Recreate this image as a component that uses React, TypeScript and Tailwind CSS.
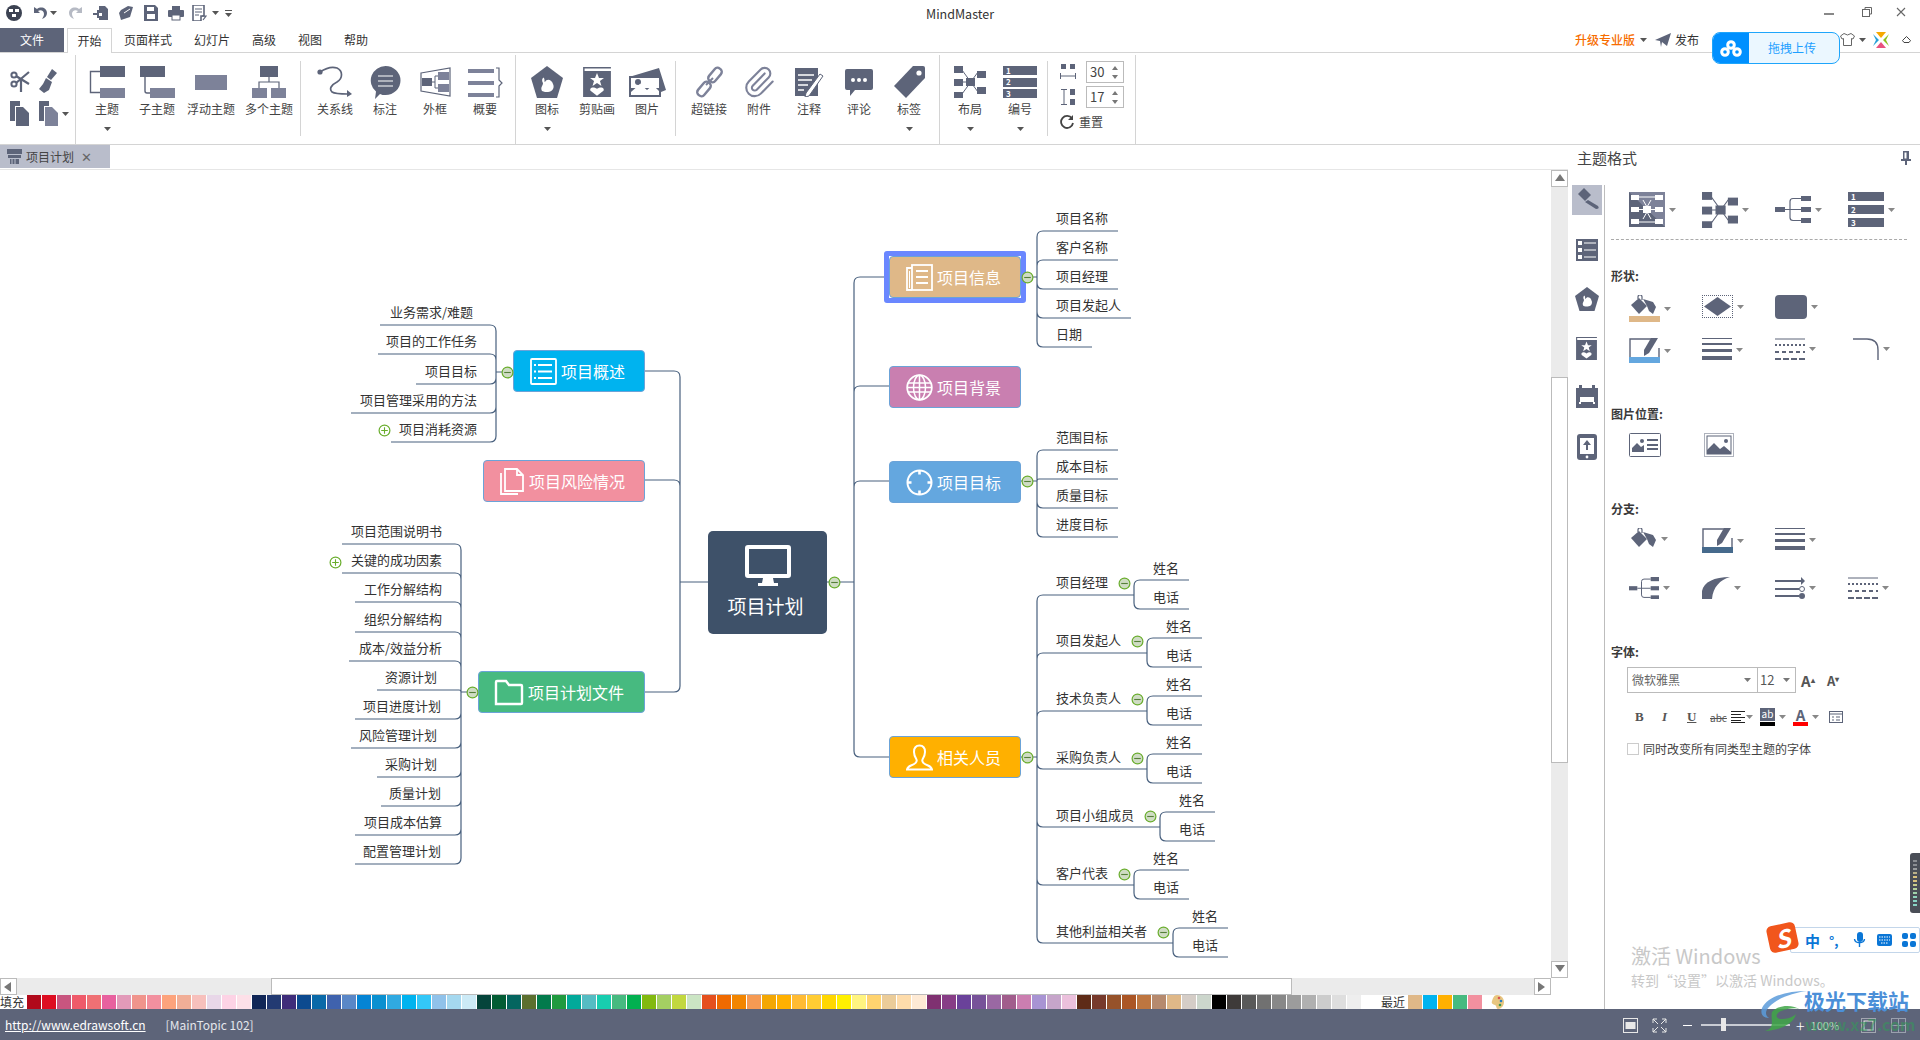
import React from 'react';
import { Paperclip } from 'lucide-react';

const C = '#5d6479';
const L = '#7d8299';
const LINE = '#48607e';

const PALETTE = [
  '#b10a1b', '#dd0d21', '#c8557f', '#ef5a6a', '#ef7074', '#e8619f', '#e29ab9', '#f0948c', '#f2909f', '#fda37c', '#f1ae97', '#f7c0bc', '#e8d7e8', '#fdd3e5', '#fde0e8',
  '#112757', '#233a72', '#3f2d7a', '#0c4a8f', '#0a69a8', '#3f62ad', '#5a87c7', '#0584d4', '#0a90d0', '#30a9e1', '#00b3ef', '#33c7f7', '#90c2ea', '#a5d8ef', '#cceaf6',
  '#05443b', '#035c34', '#04655f', '#5c6f2f', '#037a4c', '#209a3f', '#02a99a', '#55bcc3', '#18cdaf', '#47ba80', '#02b050', '#82b90f', '#a4cf62', '#c2d83f', '#cbe5c4',
  '#e5501e', '#ef6a00', '#f28500', '#f59a53', '#f3a703', '#ffb000', '#ffbb33', '#ffcc33', '#ffd700', '#fff000', '#fff480', '#ffd36f', '#ebcc99', '#fedcab', '#feead5',
  '#7f3171', '#873d86', '#6a429a', '#775299', '#9a68a3', '#a15d8c', '#cb7eb0', '#a894d3', '#c6a5ca', '#ebc0dc',
  '#5e2b17', '#773a2c', '#96522a', '#ab5626', '#be7640', '#b68a6e', '#dfb888', '#d5cdc7', '#ccd6cc',
  '#000000', '#3e3a39', '#595959', '#717171', '#888888', '#9c9c9c', '#b0b0b0', '#cccccc', '#dedede', '#eeeeee',
];
const RECENT = ['#dfb888', '#00b3ef', '#ffb000', '#47ba80', '#f2909f'];

// connector helper, all coordinates are page pixels
const tree = (fromX: number, cy: number, trunk: number, kids: [number, number][]) => {
  const dir = kids[0][1] > trunk ? 1 : -1;
  let d = `M${fromX} ${cy}H${trunk}`;
  kids.forEach(([y, end]) => {
    const gap = Math.abs(y - cy);
    const r = Math.min(6, gap);
    const sign = y < cy ? 1 : -1;
    d += `M${trunk} ${cy}V${y + sign * r}Q${trunk} ${y} ${trunk + dir * r} ${y}H${end}`;
  });
  return d;
};

const PEOPLE = [
  { name: '项目经理', y: 595, t: 583, trunk: 1134, dot: 1124 },
  { name: '项目发起人', y: 653, t: 641, trunk: 1147, dot: 1137 },
  { name: '技术负责人', y: 711, t: 699, trunk: 1147, dot: 1137 },
  { name: '采购负责人', y: 769, t: 758, trunk: 1147, dot: 1137 },
  { name: '项目小组成员', y: 827, t: 816, trunk: 1160, dot: 1150 },
  { name: '客户代表', y: 885, t: 874, trunk: 1134, dot: 1124 },
  { name: '其他利益相关者', y: 943, t: 932, trunk: 1173, dot: 1163 },
];

const OVERVIEW = [
  { name: '业务需求/难题', y: 325, end: 380, right: 473 },
  { name: '项目的工作任务', y: 354, end: 378, right: 477 },
  { name: '项目目标', y: 384, end: 416, right: 477 },
  { name: '项目管理采用的方法', y: 413, end: 351, right: 477 },
  { name: '项目消耗资源', y: 442, end: 391, right: 477 },
];

const FILES = [
  { name: '项目范围说明书', y: 544, end: 342, right: 442 },
  { name: '关键的成功因素', y: 573, end: 342, right: 442 },
  { name: '工作分解结构', y: 602, end: 355, right: 442 },
  { name: '组织分解结构', y: 632, end: 355, right: 442 },
  { name: '成本/效益分析', y: 661, end: 349, right: 442 },
  { name: '资源计划', y: 690, end: 377, right: 437 },
  { name: '项目进度计划', y: 719, end: 355, right: 441 },
  { name: '风险管理计划', y: 748, end: 351, right: 437 },
  { name: '采购计划', y: 777, end: 377, right: 437 },
  { name: '质量计划', y: 806, end: 381, right: 441 },
  { name: '项目成本估算', y: 835, end: 355, right: 442 },
  { name: '配置管理计划', y: 864, end: 355, right: 441 },
];

const INFO = [
  { name: '项目名称', y: 231, end: 1118 },
  { name: '客户名称', y: 260, end: 1118 },
  { name: '项目经理', y: 289, end: 1118 },
  { name: '项目发起人', y: 318, end: 1131 },
  { name: '日期', y: 347, end: 1092 },
];

const GOALS = [
  { name: '范围目标', y: 450, end: 1118 },
  { name: '成本目标', y: 479, end: 1118 },
  { name: '质量目标', y: 508, end: 1118 },
  { name: '进度目标', y: 537, end: 1118 },
];

const METER = ['#8a8d92', '#8a8d92', '#9a9c9e', '#b9b08a', '#d9c27e', '#d9c27e', '#c9cc8c', '#b5d29a', '#a0d3ab', '#8fd4bc', '#88d4c4', '#88d4c4'];

const Caret = ({ color = '#555' }: { color?: string }) => (
  <svg width="7" height="4" viewBox="0 0 7 4" className="shrink-0"><path d="M0 0H7L3.5 4Z" fill={color} /></svg>
);

const NodeText = ({ x, right, y, children }: { x?: number; right?: number; y: number; children: React.ReactNode }) => (
  <span
    className="absolute h-5 leading-5 text-[13px] text-[#333] whitespace-nowrap"
    style={right !== undefined ? { right: 1551 - right, top: y - 181 } : { left: x, top: y - 181 }}
  >
    {children}
  </span>
);

const Toggle = ({ x, y, plus }: { x: number; y: number; plus?: boolean }) => (
  <svg width="13" height="13" viewBox="0 0 13 13" className="absolute" style={{ left: x - 6.5, top: y - 176.5 }}>
    <circle cx="6.5" cy="6.5" r="5.4" fill={plus ? '#fff' : '#cfdcc4'} stroke="#69ad2c" strokeWidth="1.2" />
    <path d={plus ? 'M3.2 6.5H9.8M6.5 3.2V9.8' : 'M3.2 6.5H9.8'} stroke={plus ? '#69ad2c' : '#55803a'} strokeWidth="1.1" />
  </svg>
);

const Topic = ({ x, y, w, pl, bg, icon, children }: { x: number; y: number; w: number; pl: number; bg: string; icon: React.ReactNode; children: React.ReactNode }) => (
  <div
    className="absolute h-[42px] flex items-center gap-[4px] rounded-[4px] border border-[#6ba3d8] text-white text-base whitespace-nowrap"
    style={{ left: x, top: y - 170, width: w, paddingLeft: pl, backgroundColor: bg }}
  >
    {icon}
    <span>{children}</span>
  </div>
);

const IcoList = () => (
  <svg width="27" height="27" viewBox="0 0 27 27" fill="none" stroke="#fff" strokeWidth="1.8">
    <rect x="1" y="1" width="25" height="25" rx="1" />
    <path d="M8 7H22M8 13.5H22M8 20H22" />
    <path d="M4 7H6M4 13.5H6M4 20H6" strokeWidth="2.2" />
  </svg>
);
const IcoFiles = () => (
  <svg width="25" height="27" viewBox="0 0 25 27" fill="none" stroke="#fff" strokeWidth="1.8">
    <path d="M5 1H17L23 7V23H5Z" />
    <path d="M17 1V7H23" />
    <path d="M1 5V26H18" />
  </svg>
);
const IcoFolder = () => (
  <svg width="30" height="27" viewBox="0 0 30 27" fill="none" stroke="#fff" strokeWidth="2.4">
    <path d="M2 25V3Q2 2 3 2H12L15 6H27Q28 6 28 7V24Q28 25 27 25Z" />
  </svg>
);
const IcoNews = () => (
  <svg width="27" height="27" viewBox="0 0 27 27" fill="none" stroke="#fff" strokeWidth="1.8">
    <rect x="6" y="1" width="20" height="25" />
    <path d="M10 7H22M10 13H22M10 19H22" />
    <path d="M6 4H1V26H6" />
    <path d="M3.5 7V24" strokeWidth="1" />
  </svg>
);
const IcoGlobe = () => (
  <svg width="27" height="27" viewBox="0 0 27 27" fill="none" stroke="#fff" strokeWidth="1.5">
    <circle cx="13.5" cy="13.5" r="12.3" strokeWidth="1.8" />
    <ellipse cx="13.5" cy="13.5" rx="6" ry="12.3" />
    <path d="M13.5 1V26M2 9H25M1.5 13.5H25.5M2 18H25" />
  </svg>
);
const IcoTarget = () => (
  <svg width="27" height="27" viewBox="0 0 27 27" fill="none" stroke="#fff" strokeWidth="2">
    <circle cx="13.5" cy="13.5" r="12" />
    <path d="M13.5 2V5.5M13.5 21.5V25M2 13.5H5.5M21.5 13.5H25" strokeWidth="2.6" />
  </svg>
);
const IcoPerson = () => (
  <svg width="27" height="27" viewBox="0 0 27 27" fill="none" stroke="#fff" strokeWidth="2">
    <path d="M13.5 1.5C9.5 1.5 8 4.5 8 8C8 11 9.5 14 10.5 15.5C11.5 18 9 20 5 21.5C3 22.3 1.5 23.5 1 25.5H26C25.5 23.5 24 22.3 22 21.5C18 20 15.5 18 16.5 15.5C17.5 14 19 11 19 8C19 4.5 17.5 1.5 13.5 1.5Z" />
  </svg>
);

const Canvas = () => (
  <div className="relative flex-1 h-full overflow-visible bg-white">
    <svg className="absolute left-0 top-0" width="1551" height="808" viewBox="0 170 1551 808" fill="none" stroke={LINE} strokeWidth="1.2">
      <path d={tree(708, 582, 680, [[371, 645], [480, 645], [692, 645]])} />
      <path d={tree(827, 582, 854, [[277, 889], [386, 889], [481, 889], [757, 889]])} />
      <path d={tree(513, 372, 496, OVERVIEW.map((o) => [o.y, o.end] as [number, number]))} />
      <path d={tree(478, 692, 461, FILES.map((o) => [o.y, o.end] as [number, number]))} />
      <path d={tree(1021, 277, 1037, INFO.map((o) => [o.y, o.end] as [number, number]))} />
      <path d={tree(1021, 481, 1037, GOALS.map((o) => [o.y, o.end] as [number, number]))} />
      <path d={tree(1021, 757, 1037, PEOPLE.map((o) => [o.y, o.trunk] as [number, number]))} />
      {PEOPLE.map((p) => (
        <path key={p.name} d={tree(p.trunk, p.y, p.trunk, [[p.y - 15, p.trunk + 55], [p.y + 14, p.trunk + 55]])} />
      ))}
    </svg>

    {/* central topic */}
    <div className="absolute left-[708px] top-[361px] w-[119px] h-[103px] rounded-[5px] bg-[#3e5169] flex flex-col items-center text-white">
      <svg width="46" height="42" viewBox="0 0 46 42" className="mt-[14px]">
        <rect x="2" y="2" width="42" height="29" rx="1" fill="none" stroke="#fff" strokeWidth="4" />
        <path d="M18 33H28L29 38H33V41H13V38H17Z" fill="#fff" />
      </svg>
      <span className="mt-[7px] -ml-[4px] text-[19px] leading-6 whitespace-nowrap">项目计划</span>
    </div>

    <div className="absolute left-[884px] top-[81px] w-[142px] h-[52px] rounded-[3px] border-[5px] border-[#6a87ff]" />
    <Topic x={889} y={256} w={132} pl={16} bg="#dfb888" icon={<IcoNews />}>项目信息</Topic>
    <Topic x={889} y={366} w={132} pl={16} bg="#c97fb0" icon={<IcoGlobe />}>项目背景</Topic>
    <Topic x={889} y={461} w={132} pl={16} bg="#64a7df" icon={<IcoTarget />}>项目目标</Topic>
    <Topic x={889} y={736} w={132} pl={16} bg="#ffb000" icon={<IcoPerson />}>相关人员</Topic>
    <Topic x={513} y={350} w={132} pl={16} bg="#00b3ef" icon={<IcoList />}>项目概述</Topic>
    <Topic x={483} y={460} w={162} pl={16} bg="#f2909f" icon={<IcoFiles />}>项目风险情况</Topic>
    <Topic x={478} y={671} w={167} pl={15} bg="#47ba80" icon={<IcoFolder />}>项目计划文件</Topic>

    <Toggle x={834} y={582} />
    <Toggle x={507} y={372} />
    <Toggle x={472} y={692} />
    <Toggle x={1027} y={277} />
    <Toggle x={1027} y={481} />
    <Toggle x={1027} y={757} />
    <Toggle x={384} y={430} plus />
    <Toggle x={335} y={562} plus />

    {INFO.map((o) => <NodeText key={o.name} x={1056} y={o.y - 12}>{o.name}</NodeText>)}
    {GOALS.map((o) => <NodeText key={o.name} x={1056} y={o.y - 12}>{o.name}</NodeText>)}
    {OVERVIEW.map((o) => <NodeText key={o.name} right={o.right} y={o.y - 12}>{o.name}</NodeText>)}
    {FILES.map((o) => <NodeText key={o.name} right={o.right} y={o.y - 12}>{o.name}</NodeText>)}
    {PEOPLE.map((p) => (
      <React.Fragment key={p.name}>
        <NodeText x={1056} y={p.t}>{p.name}</NodeText>
        <Toggle x={p.dot} y={p.t} />
        <NodeText x={p.trunk + 19} y={p.y - 26}>姓名</NodeText>
        <NodeText x={p.trunk + 19} y={p.y + 3}>电话</NodeText>
      </React.Fragment>
    ))}
  </div>
);

/* ---------- ribbon icons ---------- */
const RibbonItem = ({ label, icon, caret, w = 50, className = '' }: { label: string; icon: React.ReactNode; caret?: boolean; w?: 50 | 58; className?: string }) => (
  <div className={`${w === 50 ? 'w-[50px]' : 'w-[58px]'} h-[91px] shrink-0 flex flex-col items-center pt-[12px] ${className}`}>
    <div className="h-[34px] flex items-center justify-center">{icon}</div>
    <span className="mt-[2px] h-4 leading-4 text-xs text-[#444] whitespace-nowrap">{label}</span>
    {caret && <div className="mt-[10px]"><Caret /></div>}
  </div>
);

const Sep = () => <div className="w-px h-[75px] self-center bg-[#d4d4d4] shrink-0" />;
const GroupSep = () => <div className="w-px h-[89px] self-end bg-[#d4d4d4] shrink-0" />;

const IcoMainTopic = () => (
  <svg width="36" height="32" viewBox="0 0 36 32">
    <rect x="11" y="0" width="25" height="11" fill={C} />
    <rect x="11" y="22" width="25" height="10" fill={L} />
    <path d="M11 5.5H1.5V26.5H11" fill="none" stroke={C} strokeWidth="1.4" />
  </svg>
);
const IcoSubTopic = () => (
  <svg width="35" height="32" viewBox="0 0 35 32">
    <rect x="0" y="0" width="25" height="11" fill={C} />
    <rect x="10" y="22" width="25" height="10" fill={L} />
    <path d="M5 11V25Q5 27 7 27H10" fill="none" stroke={C} strokeWidth="1.4" />
  </svg>
);
const IcoFloat = () => <svg width="32" height="15" viewBox="0 0 32 15"><rect width="32" height="15" fill={L} /></svg>;
const IcoMulti = () => (
  <svg width="34" height="32" viewBox="0 0 34 32">
    <rect x="8" y="0" width="18" height="11" fill={C} />
    <rect x="0" y="22" width="15" height="10" fill={L} />
    <rect x="19" y="22" width="15" height="10" fill={L} />
    <path d="M17 11V16M7 22V16H27V22" fill="none" stroke={C} strokeWidth="1.2" />
  </svg>
);
const IcoRelation = () => (
  <svg width="36" height="32" viewBox="0 0 36 32" fill="none" stroke={C} strokeWidth="1.7">
    <circle cx="3" cy="6" r="2.6" fill={C} stroke="none" />
    <path d="M3 6C9 2 14 0 20 2C26 5 26 12 20 16C14 19 12 23 15 26C18 28 25 28 31 28" />
    <path d="M30 24L35 28L30 31Z" fill={C} stroke="none" />
  </svg>
);
const IcoCallout = () => (
  <svg width="31" height="33" viewBox="0 0 31 33">
    <path d="M15.5 0A15 14.5 0 0 1 15.5 29C13 29 12 29 10 28L5 33L6 25.5A15 14.5 0 0 1 15.5 0Z" fill={C} />
    <path d="M8 10H23M8 15H23M8 20H23" stroke="#fff" strokeWidth="1.2" />
  </svg>
);
const IcoBoundary = () => (
  <svg width="31" height="30" viewBox="0 0 31 30" fill="none">
    <path d="M1 6L30 1V29L1 24Z" stroke={C} strokeWidth="1.2" />
    <rect x="2" y="11" width="10" height="8" fill={C} />
    <rect x="18" y="5" width="11" height="8" fill={L} />
    <rect x="18" y="17" width="11" height="8" fill={L} />
    <path d="M12 15H15M15 9H18M15 21H18M15 9V21" stroke={C} strokeWidth="1" />
  </svg>
);
const IcoSummary = () => (
  <svg width="35" height="31" viewBox="0 0 35 31" fill="none">
    <rect y="2" width="26" height="4" fill={L} />
    <rect y="14" width="26" height="4" fill={L} />
    <rect y="26" width="26" height="4" fill={L} />
    <path d="M28 1H31V13L34 16L31 19V30H28" stroke={C} strokeWidth="1.2" />
  </svg>
);
const IcoPentagon = ({ s = 32 }: { s?: number }) => (
  <svg width={s} height={s} viewBox="0 0 32 32">
    <path d="M16 0L32 12L26 32H6L0 12Z" fill={C} />
    <path d="M11 25C9 21 12 20 12 17C10 14 12 11 13 12C14 14 13 16 14 16C16 12 21 14 22 18C24 22 21 26 17 26C15 26 13 26 11 25Z" fill="#fff" />
  </svg>
);
const IcoClipart = ({ s = 28 }: { s?: number }) => (
  <svg width={s} height={s * 1.1} viewBox="0 0 28 31">
    <path d="M0 0H28V1.5H1.5V4H28V31H0Z" fill={C} />
    <path d="M14 6L16 11H21L17 14L18.5 19L14 16L9.5 19L11 14L7 11H12Z" fill="#fff" />
    <path d="M14 29L7.5 24C6 21 10 19 14 22C18 19 22 21 20.5 24Z" fill="#fff" />
  </svg>
);
const IcoPicture = () => (
  <svg width="37" height="29" viewBox="0 0 37 29">
    <path d="M0 9L30 0L37 22L32 24V8L4 8Z" fill={C} />
    <rect x="0" y="8" width="32" height="21" fill={C} />
    <rect x="2" y="10" width="28" height="10" fill="#fff" />
    <circle cx="9" cy="14" r="3" fill={C} />
    <path d="M2 24L11 16L18 22L24 17L30 23V27H2Z" fill="#fff" />
  </svg>
);
const IcoLink = () => (
  <svg width="31" height="32" viewBox="0 0 31 32" fill="none" stroke={L} strokeWidth="2.4">
    <rect x="-8" y="-4" width="16" height="8" rx="3.5" transform="translate(21 9) rotate(-50)" />
    <rect x="-8" y="-4" width="16" height="8" rx="3.5" transform="translate(10 23) rotate(-50)" />
    <path d="M12 19L19 12" strokeWidth="2" />
  </svg>
);
const IcoNote = () => (
  <svg width="29" height="29" viewBox="0 0 29 29">
    <rect width="23" height="28" fill={C} />
    <path d="M3 7H19M3 12H17M3 17H13M3 22H9" stroke="#fff" strokeWidth="1.6" />
    <path d="M25 6L28 8L14 28L10 29L11 25Z" fill="#fff" stroke={C} strokeWidth="1" />
  </svg>
);
const IcoComment = () => (
  <svg width="28" height="27" viewBox="0 0 28 27">
    <path d="M2 0H26Q28 0 28 2V19Q28 21 26 21H10L5 27V21H2Q0 21 0 19V2Q0 0 2 0Z" fill={C} />
    <circle cx="8" cy="11" r="2" fill="#fff" /><circle cx="14" cy="11" r="2" fill="#fff" /><circle cx="20" cy="11" r="2" fill="#fff" />
  </svg>
);
const IcoTag = () => (
  <svg width="31" height="32" viewBox="0 0 31 32">
    <path d="M19 0H29Q31 0 31 2V12L12 32L0 20Z" fill={C} />
    <circle cx="25" cy="7" r="2.6" fill="#fff" />
  </svg>
);
const IcoMapLayout = ({ s = 32 }: { s?: number }) => (
  <svg width={s} height={s} viewBox="0 0 32 32">
    <path d="M8 4L24 26M8 28L24 6M8 16H16" stroke={C} strokeWidth="1" />
    <rect x="0" y="0" width="9" height="7" fill={C} /><rect x="0" y="13" width="9" height="7" fill={C} /><rect x="0" y="26" width="9" height="7" fill={C} />
    <rect x="12" y="12" width="9" height="8" fill={C} />
    <rect x="23" y="5" width="9" height="7" fill={C} /><rect x="23" y="21" width="9" height="7" fill={C} />
  </svg>
);
const Numbered = ({ w = 34, h = 32 }: { w?: number; h?: number }) => {
  const barH = Math.round(h * 0.27);
  return (
    <div className="flex flex-col justify-between" style={{ width: w, height: h }}>
      {['1', '2', '3'].map((n) => (
        <div key={n} className="bg-[#5d6479] pl-[3px] text-[8px] font-bold text-white flex items-center" style={{ height: barH }}>{n}</div>
      ))}
    </div>
  );
};

const QatIcon = ({ children }: { children: React.ReactNode }) => (
  <svg width="16" height="16" viewBox="0 0 16 16" className="shrink-0">{children}</svg>
);

const Qat = () => (
  <div className="absolute left-[6px] top-[5px] flex items-center h-4">
    <QatIcon>
      <circle cx="8" cy="8" r="8" fill="#3c4252" />
      <rect x="3" y="4" width="4" height="3" fill="#fff" /><rect x="9" y="4" width="4" height="3" fill="#fff" />
      <rect x="6" y="9" width="4" height="3" fill="#fff" />
    </QatIcon>
    <div className="w-[10px]" />
    <QatIcon><path d="M2 2V8H8L6 6C9 4 12 6 12 9C12 11 11 12 10 14C13 13 15 11 15 8C15 3 9 1 5 4Z" fill={C} /></QatIcon>
    <div className="w-[2px]" />
    <Caret />
    <div className="w-[11px]" />
    <QatIcon><path d="M14 2V8H8L10 6C7 4 4 6 4 9C4 11 5 12 6 14C3 13 1 11 1 8C1 3 7 1 11 4Z" fill="#b6bac4" /></QatIcon>
    <div className="w-[9px]" />
    <QatIcon><path d="M6 1H12L15 4V15H6V11H9V8H6ZM0 8H4V5H6V13H4V10H0Z" fill={C} /></QatIcon>
    <div className="w-[9px]" />
    <QatIcon><path d="M3 5L10 1L15 2L12 12L3 15L1 8Z" fill={C} /><path d="M6 8L12 4" stroke="#fff" /></QatIcon>
    <div className="w-[9px]" />
    <QatIcon><path d="M1 0H12L15 3V16H1Z" fill={C} /><rect x="4" y="2" width="7" height="4" fill="#fff" /><rect x="4" y="9" width="8" height="5" fill="#fff" /></QatIcon>
    <div className="w-[9px]" />
    <QatIcon><rect x="4" y="1" width="8" height="4" fill={C} /><rect x="0" y="5" width="16" height="7" rx="1" fill={C} /><rect x="4" y="10" width="8" height="5" fill="#fff" stroke={C} /></QatIcon>
    <div className="w-[7px]" />
    <QatIcon><path d="M2 0H13V11H10V16H2Z" fill="none" stroke={C} strokeWidth="1.6" /><path d="M4 4H11M4 7H11M4 10H8M11 11H15L12 15" stroke={C} strokeWidth="1.2" fill="none" /></QatIcon>
    <div className="w-[5px]" />
    <Caret />
    <div className="w-[6px]" />
    <svg width="7" height="7" viewBox="0 0 7 7"><path d="M0 0H7V1H0ZM0 3H7L3.5 7Z" fill="#555" /></svg>
  </div>
);

const SpinBox = ({ value }: { value: string }) => (
  <div className="w-[38px] h-[22px] border border-[#bbb] flex items-center justify-between pl-[3px] pr-[5px] text-[13px] text-[#444]">
    <span>{value}</span>
    <div className="flex flex-col gap-[5px]">
      <svg width="6" height="4" viewBox="0 0 6 4"><path d="M0 4H6L3 0Z" fill="#777" /></svg>
      <svg width="6" height="4" viewBox="0 0 6 4"><path d="M0 0H6L3 4Z" fill="#777" /></svg>
    </div>
  </div>
);

const Ribbon = () => (
  <div className="relative h-[93px] border-y border-[#d4d4d4] flex bg-white">
    <div className="w-[75px] shrink-0 grid grid-cols-[29px_40px] auto-rows-[33px] pl-[10px] pt-[11px] items-center">
      <svg width="22" height="24" viewBox="0 0 22 24" fill="none" stroke={C} strokeWidth="2">
        <circle cx="4" cy="6" r="2.6" /><circle cx="4" cy="15" r="2.6" />
        <path d="M6 7L19 15M6 14L19 3M11 11V23" strokeWidth="2.2" />
      </svg>
      <svg width="18" height="24" viewBox="0 0 18 24"><path d="M13 0L18 4L12 11L8 8Z" fill={C} /><path d="M7 9L13 13L10 21L5 24L0 20L4 15Z" fill={C} /></svg>
      <svg width="19" height="25" viewBox="0 0 19 25"><path d="M0 0H10V5H5V20H0Z" fill={C} /><path d="M6 6H13L19 12V25H6Z" fill={C} /></svg>
      <div className="flex items-center gap-[4px]">
        <svg width="19" height="25" viewBox="0 0 19 25"><path d="M0 0H10V5H5V20H0Z" fill={C} /><path d="M6 6H13L19 12V25H6Z" fill={L} /></svg>
        <Caret />
      </div>
    </div>
    <GroupSep />
    <div className="flex pl-[6px]">
      <RibbonItem label="主题" caret icon={<IcoMainTopic />} />
      <RibbonItem label="子主题" icon={<IcoSubTopic />} />
      <RibbonItem label="浮动主题" w={58} icon={<IcoFloat />} />
      <RibbonItem label="多个主题" w={58} icon={<IcoMulti />} />
    </div>
    <div className="w-[2px]" />
    <Sep />
    <div className="flex pl-[9px] pr-[5px]">
      <RibbonItem label="关系线" icon={<IcoRelation />} />
      <RibbonItem label="标注" icon={<IcoCallout />} />
      <RibbonItem label="外框" icon={<IcoBoundary />} />
      <RibbonItem label="概要" icon={<IcoSummary />} />
    </div>
    <GroupSep />
    <div className="flex pl-[6px] pr-[3px]">
      <RibbonItem label="图标" caret icon={<IcoPentagon />} />
      <RibbonItem label="剪贴画" icon={<IcoClipart />} />
      <RibbonItem label="图片" icon={<IcoPicture />} />
    </div>
    <Sep />
    <div className="flex pl-[8px] pr-[5px]">
      <RibbonItem label="超链接" icon={<IcoLink />} />
      <RibbonItem label="附件" icon={<Paperclip size={34} color={L} strokeWidth={1.5} />} />
      <RibbonItem label="注释" icon={<IcoNote />} />
      <RibbonItem label="评论" icon={<IcoComment />} />
      <RibbonItem label="标签" caret icon={<IcoTag />} />
    </div>
    <GroupSep />
    <div className="flex pl-[5px] pr-[2px]">
      <RibbonItem label="布局" caret icon={<IcoMapLayout />} />
      <RibbonItem label="编号" caret icon={<Numbered />} />
    </div>
    <Sep />
    <div className="w-[87px] flex flex-col pl-[12px] pt-[8px]">
      <div className="flex items-center gap-[10px]">
        <svg width="16" height="16" viewBox="0 0 16 16"><rect x="1" y="0" width="5" height="5" fill={C} /><rect x="10" y="0" width="5" height="5" fill={C} /><path d="M0.5 9V15M15.5 9V15M0 12H16" stroke={C} /></svg>
        <SpinBox value="30" />
      </div>
      <div className="flex items-center gap-[10px] mt-[3px]">
        <svg width="16" height="16" viewBox="0 0 16 16"><path d="M1 0.5H7M1 15.5H7M4 0.5V15.5" stroke={C} /><rect x="10" y="0" width="5" height="6" fill={C} /><rect x="10" y="10" width="5" height="6" fill={C} /></svg>
        <SpinBox value="17" />
      </div>
      <div className="flex items-center gap-[5px] mt-[4px] h-5 text-xs text-[#444]">
        <svg width="14" height="15" viewBox="0 0 14 15" fill="none" stroke="#444" strokeWidth="1.8"><path d="M12 3.5A6 6 0 1 0 13 8" /><path d="M13 0V5H8" fill="#444" stroke="none" /></svg>
        <span>重置</span>
      </div>
    </div>
    <GroupSep />
  </div>
);

const ScrollBtn = ({ dir }: { dir: 'up' | 'down' | 'left' | 'right' }) => {
  const d = { up: 'M0 7H10L5 0Z', down: 'M0 0H10L5 7Z', left: 'M7 0V10L0 5Z', right: 'M0 0V10L7 5Z' }[dir];
  return (
    <div className="w-[17px] h-[17px] shrink-0 bg-white border border-[#bbb] flex items-center justify-center">
      <svg width="10" height="10" viewBox="0 0 10 10"><path d={d} fill="#777" /></svg>
    </div>
  );
};

const Cell = ({ children }: { children: React.ReactNode }) => (
  <div className="w-[73px] shrink-0 flex items-center gap-[4px]">{children}<Caret color="#888" /></div>
);

const Bucket = () => (
  <svg width="28" height="21" viewBox="0 0 28 21">
    <path d="M2 10L10 3L18 11L10 19Z" fill={C} />
    <path d="M9 4V2Q9 0 11 0T13 2V5" fill="none" stroke={C} strokeWidth="1.2" />
    <path d="M14 4L24 7L27 12L24 19L20 16L18 11Z" fill={C} />
  </svg>
);
const PenBox = ({ bar }: { bar: string }) => (
  <svg width="31" height="26" viewBox="0 0 31 26">
    <path d="M1 19V1H23M30 10V19" fill="none" stroke={C} strokeWidth="1.4" />
    <path d="M22 0H29L20 15L15 18L15 12Z" fill={C} />
    <rect y="19" width="31" height="6" fill={bar} />
  </svg>
);
const Weights = () => (
  <svg width="30" height="23" viewBox="0 0 30 23" fill={C}>
    <rect width="30" height="1" /><rect y="5" width="30" height="2" /><rect y="11" width="30" height="3" /><rect y="18" width="30" height="4" />
  </svg>
);
const Dashes = () => (
  <svg width="30" height="22" viewBox="0 0 30 22" fill="none" stroke={C}>
    <path d="M0 1H30" /><path d="M0 7H30" strokeWidth="2" strokeDasharray="2 2" /><path d="M0 14H30" strokeWidth="2" strokeDasharray="4 3" /><path d="M0 21H30" strokeWidth="2" strokeDasharray="6 2" />
  </svg>
);
const BranchFork = ({ w = 30 }: { w?: number }) => (
  <svg width={w} height={w * 0.75} viewBox="0 0 36 27" fill={C}>
    <rect x="0" y="11" width="10" height="5" /><rect x="26" y="0" width="10" height="5" /><rect x="26" y="11" width="10" height="5" /><rect x="26" y="22" width="10" height="5" />
    <path d="M10 13.5H26M26 2.5H18Q15 2.5 15 5.5V21.5Q15 24.5 18 24.5H26" fill="none" stroke={C} strokeWidth="1.2" />
  </svg>
);

const Label = ({ children }: { children: React.ReactNode }) => (
  <div className="h-4 leading-4 text-xs font-semibold text-[#3a3a3a]">{children}</div>
);

const Panel = () => (
  <div className="w-[352px] shrink-0 flex flex-col bg-white">
    <div className="h-10 relative pl-[9px] pt-[3px] text-[15px] leading-5 text-[#444]">
      主题格式
      <svg width="10" height="14" viewBox="0 0 10 14" className="absolute right-[9px] top-[6px]"><path d="M2 0H8V8H10V10H6V14H4V10H0V8H2Z" fill={C} /><rect x="3.5" y="1.5" width="2" height="6" fill="#fff" /></svg>
    </div>
    <div className="flex-1 flex">
      {/* side tabs */}
      <div className="w-[37px] shrink-0 border-r border-[#bdbdbd] flex flex-col items-center pl-[4px] pr-[3px]">
        <div className="w-[30px] h-[30px] bg-[#b9bdcb] flex items-center justify-center">
          <svg width="26" height="24" viewBox="0 0 26 24"><path d="M4 6L10 0L17 7L11 13Z" fill={C} /><path d="M14 12L24 18Q26 21 22 21L11 14" fill={C} /></svg>
        </div>
        <svg width="22" height="22" viewBox="0 0 22 22" className="mt-[24px]"><rect width="22" height="22" fill={C} /><rect x="2" y="2" width="4" height="4" fill="#fff" /><rect x="2" y="9" width="4" height="4" fill="#fff" /><rect x="2" y="16" width="4" height="4" fill="#fff" /><path d="M8 4H20M8 11H20M8 18H20" stroke="#fff" /></svg>
        <div className="mt-[26px]"><IcoPentagon s={24} /></div>
        <div className="mt-[26px]"><IcoClipart s={21} /></div>
        <svg width="22" height="24" viewBox="0 0 22 24" className="mt-[25px]"><path d="M0 3H3V0H6V3H16V0H19V3H22V23H0Z" fill={C} /><rect x="4" y="12" width="14" height="5" fill="#fff" /><rect x="3" y="17" width="2" height="2" fill="#fff" /><rect x="17" y="17" width="2" height="2" fill="#fff" /></svg>
        <svg width="20" height="26" viewBox="0 0 20 26" className="mt-[25px]"><rect width="20" height="26" rx="3" fill={C} /><rect x="3" y="4" width="14" height="16" fill="#fff" /><path d="M10 6L14 11H11V16H9V11H6Z" fill={C} /><circle cx="10" cy="23" r="1.4" fill="#fff" /></svg>
      </div>
      {/* format content */}
      <div className="flex-1 pl-[6px] flex flex-col">
        <div className="flex pl-[18px] mt-[7px] h-[35px]">
          <Cell>
            <svg width="36" height="35" viewBox="0 0 36 35">
              <rect width="36" height="35" fill={L} />
              <path d="M0 0L36 35H0Z" fill={C} />
              <path d="M10 5H26M10 30H26M10 17.5H26M14 8L18 15M22 8L18 15M14 27L18 20M22 27L18 20" stroke="#fff" fill="none" />
              <rect x="2" y="3" width="8" height="5" fill="#fff" /><rect x="26" y="3" width="8" height="5" fill="#fff" />
              <rect x="2" y="15" width="8" height="5" fill="#fff" /><rect x="26" y="15" width="8" height="5" fill="#fff" />
              <rect x="2" y="27" width="8" height="5" fill="#fff" /><rect x="26" y="27" width="8" height="5" fill="#fff" />
              <rect x="14" y="14" width="8" height="7" fill="#fff" />
            </svg>
          </Cell>
          <Cell><IcoMapLayout s={36} /></Cell>
          <Cell><BranchFork w={36} /></Cell>
          <Cell><Numbered w={36} h={35} /></Cell>
        </div>
        <div className="mt-[12px] w-[296px] border-t border-dashed border-[#aaa]" />
        <div className="mt-[28px]"><Label>形状:</Label></div>
        <div className="flex pl-[18px] mt-[11px] h-[27px] items-start">
          <Cell>
            <div className="flex flex-col items-start gap-0">
              <Bucket />
              <div className="w-[31px] h-[6px] bg-[#dfb888]" />
            </div>
          </Cell>
          <Cell>
            <div className="w-[31px] h-[23px] border border-dotted border-[#5d6479] flex items-center justify-center">
              <svg width="27" height="19" viewBox="0 0 27 19"><path d="M13.5 0L27 9.5L13.5 19L0 9.5Z" fill={C} /></svg>
            </div>
          </Cell>
          <Cell><div className="w-[32px] h-[24px] rounded-[4px] bg-[#5d6479]" /></Cell>
        </div>
        <div className="flex pl-[18px] mt-[16px] h-[25px] items-start">
          <Cell><PenBox bar="#64a7df" /></Cell>
          <Cell><Weights /></Cell>
          <Cell><Dashes /></Cell>
          <div className="flex items-center gap-[4px] ml-[5px]">
            <svg width="26" height="22" viewBox="0 0 26 22" fill="none" stroke={C} strokeWidth="1.4"><path d="M0 1H14Q25 1 25 12V22" /></svg>
            <Caret color="#888" />
          </div>
        </div>
        <div className="mt-[43px]"><Label>图片位置:</Label></div>
        <div className="flex pl-[18px] mt-[11px] h-[24px]">
          <div className="w-[75px]">
            <svg width="32" height="24" viewBox="0 0 32 24" fill="none">
              <rect x="0.5" y="0.5" width="31" height="23" rx="1" stroke={C} />
              <path d="M3 19V15L8 10L12 14L15 12V19Z" fill={C} /><circle cx="13" cy="8" r="2" fill={C} />
              <path d="M18 7H29M18 12H29M18 16H29" stroke={C} strokeWidth="2" />
            </svg>
          </div>
          <svg width="30" height="24" viewBox="0 0 30 24" fill="none">
            <rect x="0.5" y="0.5" width="29" height="23" stroke={C} strokeDasharray="1 1" />
            <rect x="3" y="3" width="24" height="18" stroke={C} />
            <path d="M3 21V17L10 10L16 16L20 13L27 19V21Z" fill={C} /><circle cx="22" cy="8" r="2" fill={C} />
          </svg>
        </div>
        <div className="mt-[44px]"><Label>分支:</Label></div>
        <div className="flex pl-[18px] mt-[11px] h-[25px] items-start">
          <Cell><Bucket /></Cell>
          <Cell><PenBox bar="#466a8c" /></Cell>
          <Cell><Weights /></Cell>
        </div>
        <div className="flex pl-[18px] mt-[24px] h-[22px] items-center">
          <Cell><BranchFork /></Cell>
          <Cell>
            <svg width="28" height="22" viewBox="0 0 28 22"><path d="M0 22V14C2 5 12 0 28 0C18 3 11 10 10 22Z" fill={C} /></svg>
          </Cell>
          <Cell>
            <svg width="30" height="22" viewBox="0 0 30 22" fill={C}>
              <path d="M0 3H26V0L30 4L26 8V5H0Z" /><rect y="11" width="24" height="2" /><circle cx="27" cy="12" r="2.5" fill="none" stroke={C} /><rect y="18" width="24" height="2" /><circle cx="27" cy="19" r="3" />
            </svg>
          </Cell>
          <Cell><Dashes /></Cell>
        </div>
        <div className="mt-[45px]"><Label>字体:</Label></div>
        <div className="flex items-center pl-[16px] mt-[7px] h-[26px]">
          <div className="w-[131px] h-[26px] border border-[#bbb] flex items-center justify-between pl-[4px] pr-[6px] text-xs text-[#666]">
            微软雅黑<Caret color="#777" />
          </div>
          <div className="w-[38px] h-[26px] border border-l-0 border-[#bbb] flex items-center justify-between pl-[2px] pr-[5px] text-[13px] text-[#555]">
            12<Caret color="#777" />
          </div>
          <span className="ml-[5px] w-[26px] text-[15px] font-bold text-[#555] leading-none">A<sup className="text-[8px]">▴</sup></span>
          <span className="w-[26px] text-[13px] font-bold text-[#555] leading-none">A<sup className="text-[8px]">▾</sup></span>
        </div>
        <div className="flex items-center pl-[24px] mt-[15px] h-[18px] text-[#555]">
          <span className="w-[27px] font-['Liberation_Serif'] font-bold text-[13px]">B</span>
          <span className="w-[25px] font-['Liberation_Serif'] font-bold italic text-[13px]">I</span>
          <span className="w-[23px] font-['Liberation_Serif'] font-bold underline text-[13px]">U</span>
          <span className="w-[21px] text-[10px] line-through">abc</span>
          <svg width="14" height="12" viewBox="0 0 14 12" stroke="#222"><path d="M0 .5H14M0 3.5H10M0 6.5H14M0 9.5H10M0 11.5H14" /></svg>
          <div className="ml-[1px]"><Caret color="#888" /></div>
          <div className="ml-[7px] w-[15px] h-[18px] flex flex-col">
            <div className="h-[13px] bg-[#5d6479] text-white text-[10px] leading-[12px] text-center">ab</div>
            <div className="mt-[1px] h-[4px] bg-black" />
          </div>
          <div className="ml-[4px]"><Caret color="#888" /></div>
          <div className="ml-[7px] w-[15px] h-[18px] flex flex-col items-center">
            <span className="h-[13px] text-[15px] font-bold leading-[13px] text-[#5d6479]">A</span>
            <div className="mt-[1px] w-full h-[4px] bg-[#ff0000]" />
          </div>
          <div className="ml-[4px]"><Caret color="#888" /></div>
          <svg width="14" height="12" viewBox="0 0 14 12" fill="none" stroke={C} className="ml-[10px]"><rect x=".5" y=".5" width="13" height="11" /><path d="M0 3H14M3 6H5M7 6H11M3 9H5M7 9H11" /></svg>
        </div>
        <div className="flex items-center pl-[16px] mt-[16px] h-[14px]">
          <div className="w-[12px] h-[12px] border border-[#ccc]" />
          <span className="ml-[4px] text-xs text-[#444] whitespace-nowrap">同时改变所有同类型主题的字体</span>
        </div>
      </div>
    </div>
  </div>
);

const StatusBar = () => (
  <div className="relative h-[31px] bg-[#5d6479] flex items-center pl-[5px] text-xs text-white whitespace-nowrap">
    <span className="underline">http://www.edrawsoft.cn</span>
    <span className="ml-[20px] text-[#e4e6ec]">[MainTopic 102]</span>
    <div className="absolute left-[1623px] top-[8px] flex items-center">
      <svg width="15" height="15" viewBox="0 0 15 15" fill="none" stroke="#e8e8e8"><rect x=".5" y=".5" width="14" height="14" /><rect x="2.5" y="4" width="10" height="7" fill="#e8e8e8" stroke="none" /></svg>
      <svg width="15" height="15" viewBox="0 0 15 15" fill="none" stroke="#e8e8e8" className="ml-[14px]"><path d="M1 5V1H5M10 1H14V5M14 10V14H10M5 14H1V10M1 1L6 6M14 1L9 6M14 14L9 9M1 14L6 9" /></svg>
      <div className="ml-[16px] w-[9px] h-px bg-white" />
      <div className="relative ml-[9px] w-[89px] h-[2px] bg-[#c9ccd4]">
        <div className="absolute left-[20px] top-[-6px] w-[5px] h-[13px] bg-[#e8e8e8]" />
      </div>
      <span className="ml-[6px] text-base leading-none font-light">+</span>
      <span className="ml-[6px] text-[11px] text-[#cfe0cf]">100%</span>
      <svg width="15" height="15" viewBox="0 0 15 15" fill="none" stroke="#e8e8e8" className="ml-[22px]"><rect x=".5" y=".5" width="14" height="14" strokeDasharray="1 1" /><rect x="3" y="3" width="9" height="9" /></svg>
      <svg width="15" height="15" viewBox="0 0 15 15" fill="none" stroke="#9aa0ae" className="ml-[15px]"><rect x=".5" y=".5" width="14" height="14" /><path d="M7.5 0V15M0 7.5H15" /></svg>
    </div>
  </div>
);

export default function App() {
  return (
    <div className="relative w-[1920px] h-[1040px] overflow-hidden bg-white font-['Noto_Sans_CJK_SC','Liberation_Sans',sans-serif] text-[#333]">
      {/* title bar */}
      <div className="relative h-[28px]">
        <Qat />
        <div className="absolute left-0 right-0 top-[4px] text-center text-[12.5px] leading-5 text-[#333]">MindMaster</div>
        <svg width="10" height="2" className="absolute left-[1824px] top-[13px]"><rect width="10" height="2" fill="#888" /></svg>
        <svg width="10" height="10" viewBox="0 0 10 10" fill="none" stroke="#666" className="absolute left-[1862px] top-[7px]"><rect x=".5" y="2.5" width="7" height="7" /><path d="M3 2V.5H9.5V7H8" /></svg>
        <svg width="10" height="10" viewBox="0 0 10 10" stroke="#666" className="absolute left-[1896px] top-[7px]"><path d="M1 1L9 9M9 1L1 9" strokeWidth="1.1" /></svg>
      </div>

      {/* menu tabs */}
      <div className="relative h-[24px] flex text-xs text-[#333] z-10">
        <div className="w-[64px] h-[24px] bg-[#5d6479] text-white flex items-center justify-center">文件</div>
        <div className="ml-[3px] w-[45px] h-[25px] border-x border-t border-[#d4d4d4] bg-white flex items-center justify-center">开始</div>
        <span className="ml-[12px] leading-[24px]">页面样式</span>
        <span className="ml-[22px] leading-[24px]">幻灯片</span>
        <span className="ml-[22px] leading-[24px]">高级</span>
        <span className="ml-[22px] leading-[24px]">视图</span>
        <span className="ml-[22px] leading-[24px]">帮助</span>
        <div className="absolute left-[1575px] top-0 h-[24px] flex items-center whitespace-nowrap">
          <span className="text-[#f76d00] font-medium">升级专业版</span>
          <div className="ml-[5px]"><Caret /></div>
          <svg width="16" height="14" viewBox="0 0 16 14" className="ml-[8px]"><path d="M0 7L16 0L12 13L7 9L6 14L5 8Z" fill={C} /></svg>
          <span className="ml-[4px]">发布</span>
        </div>
        <svg width="15" height="13" viewBox="0 0 15 13" fill="#fff" stroke="#666" className="absolute left-[1840px] top-[5px]"><path d="M4 .5L7.5 2L11 .5L14.5 3L13 6L11.5 5.5V12.5H3.500V5.500L2 6L.5 3Z" /></svg>
        <div className="absolute left-[1859px] top-[10px]"><Caret /></div>
        <svg width="16" height="16" viewBox="0 0 16 16" className="absolute left-[1873px] top-[4px]">
          <path d="M0 2L6 8L0 14L3 8Z" fill="#25a0d8" /><path d="M16 2L10 8L16 14L13 8Z" fill="#8cc21f" /><path d="M3 0H13L8 6Z" fill="#f6a800" /><path d="M3 16H13L8 10Z" fill="#e9527e" />
        </svg>
        <svg width="9" height="7" viewBox="0 0 9 7" fill="none" stroke="#444" className="absolute left-[1902px] top-[8px]"><path d="M.5 4.500L4.500 .5L8.500 4.500L7 6.500H2Z" /></svg>
      </div>

      <Ribbon />

      {/* body */}
      <div className="h-[864px] flex">
        <div className="w-[1568px] shrink-0 flex flex-col">
          <div className="h-[25px] border-b border-[#e6e6e6] flex items-end pb-0">
            <div className="w-[110px] h-[23px] mb-px bg-[#b9bdcb] flex items-center pl-[7px] text-xs text-[#444]">
              <svg width="15" height="15" viewBox="0 0 15 15" className="shrink-0"><rect width="15" height="5" fill={C} /><rect x="1" y="6" width="13" height="3" fill={C} /><rect x="3" y="10" width="9" height="5" fill={C} /><path d="M5 10V15M8 10V15" stroke="#b9bdcb" /></svg>
              <span className="ml-[4px]">项目计划</span>
              <span className="ml-[7px] text-[#666] text-[13px] leading-none">✕</span>
            </div>
          </div>
          <div className="h-[808px] flex">
            <Canvas />
            <div className="w-[17px] shrink-0 flex flex-col">
              <ScrollBtn dir="up" />
              <div className="h-[190px] bg-[#ebebeb]" />
              <div className="h-[386px] bg-white border border-[#bbb]" />
              <div className="flex-1 bg-[#ebebeb]" />
              <ScrollBtn dir="down" />
            </div>
          </div>
          <div className="h-[17px] w-[1551px] flex">
            <ScrollBtn dir="left" />
            <div className="w-[254px] bg-[#ebebeb]" />
            <div className="w-[1021px] bg-white border border-[#bbb]" />
            <div className="flex-1 bg-[#ebebeb]" />
            <ScrollBtn dir="right" />
          </div>
          <div className="h-[14px] flex items-center text-xs whitespace-nowrap">
            <span className="w-[27px] shrink-0 leading-[14px]">填充</span>
            {PALETTE.map((c, i) => (
              <div key={i} className="w-[15px] h-[14px] shrink-0 border-r border-white" style={{ backgroundColor: c }} />
            ))}
            <span className="ml-[19px] w-[27px] shrink-0 leading-[14px]">最近</span>
            {RECENT.map((c, i) => (
              <div key={i} className="w-[15px] h-[14px] shrink-0 border-r border-white" style={{ backgroundColor: c }} />
            ))}
            <svg width="13" height="14" viewBox="0 0 13 14" className="ml-[8px] shrink-0">
              <path d="M6 0C10 0 13 3 13 7C13 11 10 14 7 14C5 14 6 11 4 10C2 9 0 9 1 6C2 3 3 0 6 0Z" fill="#e8c680" />
              <circle cx="8" cy="3" r="1.300" fill="#d9534f" /><circle cx="10" cy="6" r="1.300" fill="#2b7fc3" /><circle cx="9" cy="10" r="1.300" fill="#3d9a4a" />
            </svg>
          </div>
        </div>
        <Panel />
      </div>

      <StatusBar />

      {/* upload widget over the ribbon */}
      <div className="absolute left-[1712px] top-[32px] w-[128px] h-[32px] rounded-[8px] border border-[#1ea5fb] bg-[#ebf7ff] flex overflow-hidden z-20">
        <div className="w-[36px] bg-[#0090ff] flex items-center justify-center">
          <svg width="22" height="17" viewBox="0 0 22 17" fill="none" stroke="#fff" strokeWidth="3"><circle cx="11" cy="5" r="3.300" /><circle cx="5" cy="12" r="3.300" /><circle cx="17" cy="12" r="3.300" /></svg>
        </div>
        <span className="ml-[19px] text-xs leading-[30px] text-[#1e9fff]">拖拽上传</span>
      </div>

      {/* input method bar and level meter */}
      <div className="absolute left-[1910px] top-[853px] w-[10px] h-[60px] rounded-l-[3px] bg-[#4a4e57] flex flex-col justify-center gap-[2px] pl-[3px] z-20">
        {METER.map((c, i) => (
          <div key={i} className="w-[4px] h-[2px]" style={{ backgroundColor: c }} />
        ))}
      </div>
      <div className="absolute left-[1790px] top-[927px] w-[130px] h-[26px] border border-[#c3d6ea] rounded-[2px] bg-white/95 z-20 flex items-center pl-[14px] text-[#0a76d6]">
        <span className="w-[24px] text-[15px] font-bold leading-none">中</span>
        <span className="w-[24px] text-[13px] font-bold leading-none">°,</span>
        <svg width="13" height="16" viewBox="0 0 13 16" className="mr-[11px]"><rect x="4" y="0" width="6" height="10" rx="3" fill="#0a76d6" /><path d="M1.500 7C2 12 11 12 11.500 7M6.500 11V15" fill="none" stroke="#0a76d6" strokeWidth="1.400" /></svg>
        <svg width="15" height="12" viewBox="0 0 15 12" className="mr-[10px]"><rect width="15" height="12" rx="2" fill="#0a76d6" /><path d="M2 3H13M2 6H13M4 9H11" stroke="#fff" strokeDasharray="1.500 1" /></svg>
        <svg width="14" height="14" viewBox="0 0 14 14" fill="#0a76d6"><rect width="6" height="6" rx="2" /><rect x="8" width="6" height="6" rx="2" /><rect y="8" width="6" height="6" rx="2" /><rect x="8" y="8" width="6" height="6" rx="2" /></svg>
      </div>
      <div className="absolute left-[1768px] top-[924px] w-[29px] h-[27px] rounded-[5px] bg-[#f1561c] -rotate-12 flex items-center justify-center text-white text-[24px] font-bold italic leading-none z-20">S</div>

      {/* windows activation notice */}
      <div className="absolute left-[1631px] top-[942px] text-[20px] leading-7 text-[#c8c8c8] whitespace-nowrap font-['Noto_Sans_CJK_SC','Open_Sans',sans-serif]">激活 Windows</div>
      <div className="absolute left-[1631px] top-[970px] text-sm leading-5 text-[#c8c8c8] whitespace-nowrap">转到“设置”以激活 Windows。</div>

      {/* site watermark */}
      <svg width="48" height="42" viewBox="0 0 48 42" className="absolute left-[1760px] top-[990px] z-20">
        <path d="M47 1C28 1 8 6 2 18C0 24 3 28 9 28C5 25 5 21 9 17C17 8 33 3 47 1Z" fill="#5b9bdb" fillOpacity="0.85" />
        <path d="M12 22C18 15 32 14 41 20C38 17 28 18 21 21C15 24 15 29 22 29C28 29 33 27 36 24C34 33 22 40 5 41C16 38 10 28 12 22Z" fill="#3fa648" fillOpacity="0.85" />
      </svg>
      <div className="absolute left-[1804px] top-[986px] text-[21px] font-bold leading-7 text-[#4b8fd8] whitespace-nowrap z-20">极光下载站</div>
      <div className="absolute left-[1805px] top-[1014px] text-base font-bold leading-5 text-[#2f9e55]/50 whitespace-nowrap z-20">www.xz7.com</div>
    </div>
  );
}
